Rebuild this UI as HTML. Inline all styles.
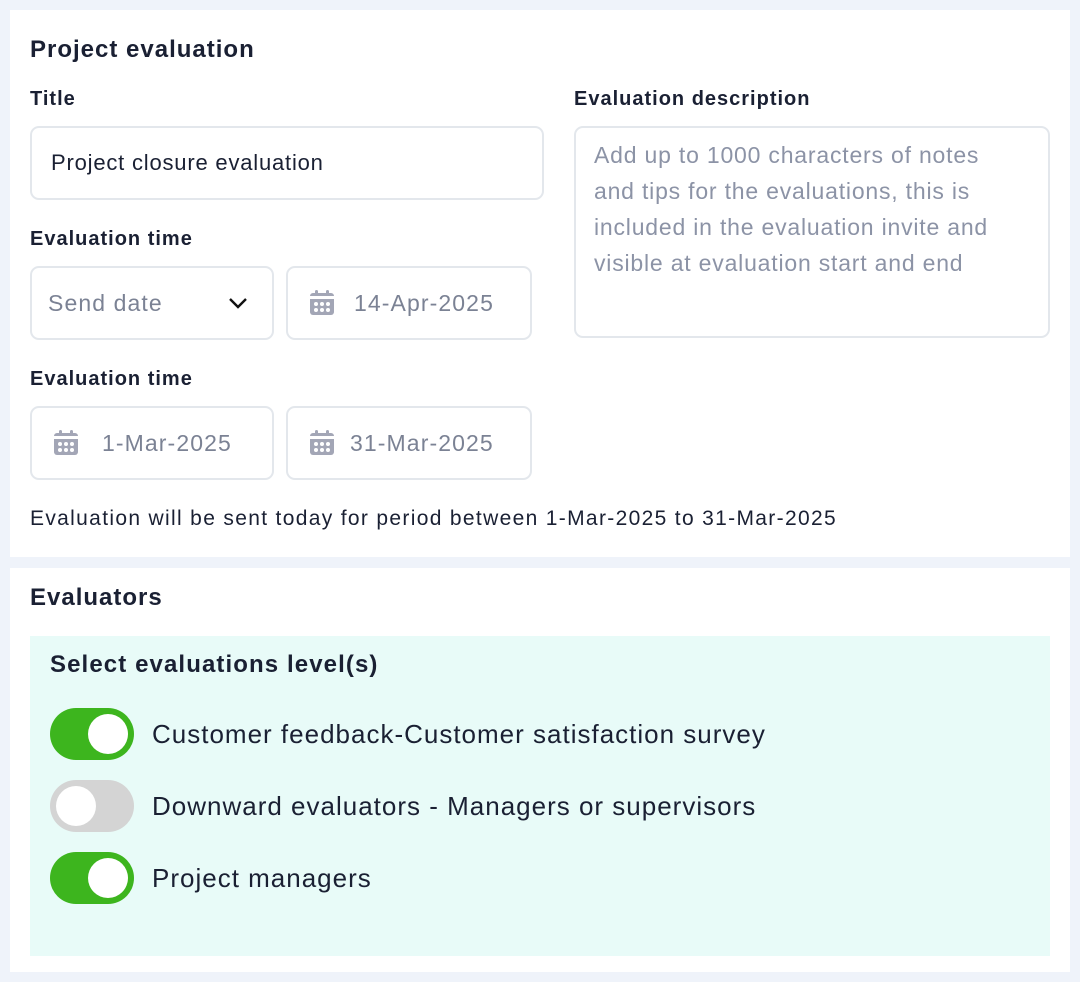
<!DOCTYPE html>
<html><head><style>
*{box-sizing:border-box;margin:0;padding:0}
body{width:1080px;height:982px;background:#eff3fa;font-family:"Liberation Sans",sans-serif;color:#1a2033;position:relative;overflow:hidden}
.card{position:absolute;left:10px;width:1060px;background:#fff}
.a{position:absolute}
h2{position:absolute;font-size:24px;font-weight:bold;color:#1a2033;letter-spacing:1px}
.lbl{position:absolute;font-size:20px;font-weight:bold;color:#1a2033;letter-spacing:1px}
.box{position:absolute;border:2px solid #e3e7ec;border-radius:9px;background:#fff;font-size:23px;color:#7b8294;display:flex;align-items:center;letter-spacing:1.1px}
.cal{display:inline-block;width:28px;height:28px;margin-right:18px}
.tg{position:absolute;left:50px;width:84px;height:52px;border-radius:26px}
.tg i{position:absolute;top:6px;width:40px;height:40px;border-radius:50%;background:#fff}
.tl{position:absolute;left:152px;font-size:26px;color:#1a2033;letter-spacing:1px}
</style></head><body>
<svg width="0" height="0" style="position:absolute"><defs><symbol id="c" viewBox="0 0 28 28"><rect x="2" y="4" width="24" height="22" rx="3" fill="#a3a6b6"/><rect x="7" y="1" width="3" height="6" rx="1.5" fill="#a3a6b6"/><rect x="18" y="1" width="3" height="6" rx="1.5" fill="#a3a6b6"/><rect x="2" y="7" width="24" height="3" fill="#fff"/><g fill="#fff"><circle cx="8" cy="15" r="2"/><circle cx="14" cy="15" r="2"/><circle cx="20" cy="15" r="2"/><circle cx="8" cy="21" r="2"/><circle cx="14" cy="21" r="2"/><circle cx="20" cy="21" r="2"/></g></symbol></defs></svg>
<div class="card" style="top:10px;height:547px"></div>
<div class="card" style="top:568px;height:404px"></div>
<h2 style="left:30px;top:36px">Project evaluation</h2>
<div class="lbl" style="left:30px;top:88px">Title</div>
<div class="lbl" style="left:574px;top:88px">Evaluation description</div>
<div class="box" style="left:30px;top:126px;width:514px;height:74px;padding-left:19px;color:#1a2033;font-size:22px;letter-spacing:0.8px">Project closure evaluation</div>
<div class="box" style="left:574px;top:126px;width:476px;height:212px;align-items:flex-start;padding:9px 34px 14px 18px;line-height:36px;font-size:23px;color:#8c93a6;letter-spacing:0.8px">Add up to 1000 characters of notes and tips for the evaluations, this is included in the evaluation invite and visible at evaluation start and end</div>
<div class="lbl" style="left:30px;top:228px">Evaluation time</div>
<div class="box" style="left:30px;top:266px;width:244px;height:74px;padding-left:16px">Send date<svg style="position:absolute;left:196px;top:28px" width="20" height="14" viewBox="0 0 20 14"><path d="M2 3l8 8 8-8" fill="none" stroke="#111" stroke-width="2.4"/></svg></div>
<div class="box" style="left:286px;top:266px;width:246px;height:74px;padding-left:20px"><svg class="cal"><use href="#c"/></svg>14-Apr-2025</div>
<div class="lbl" style="left:30px;top:368px">Evaluation time</div>
<div class="box" style="left:30px;top:406px;width:244px;height:74px;padding-left:20px"><svg class="cal" style="margin-right:22px"><use href="#c"/></svg>1-Mar-2025</div>
<div class="box" style="left:286px;top:406px;width:246px;height:74px;padding-left:20px"><svg class="cal" style="margin-right:14px"><use href="#c"/></svg>31-Mar-2025</div>
<div class="a" style="left:30px;top:507px;font-size:21px;letter-spacing:1.33px">Evaluation will be sent today for period between 1-Mar-2025 to 31-Mar-2025</div>
<h2 style="left:30px;top:584px">Evaluators</h2>
<div class="a" style="left:30px;top:636px;width:1020px;height:320px;background:#e8fbf8"></div>
<div class="a" style="left:50px;top:651px;font-size:24px;font-weight:bold;letter-spacing:1.1px">Select evaluations level(s)</div>
<div class="tg" style="top:708px;background:#3db51e"><i style="left:38px"></i></div>
<div class="tl" style="top:719px">Customer feedback-Customer satisfaction survey</div>
<div class="tg" style="top:780px;background:#d4d4d4"><i style="left:6px"></i></div>
<div class="tl" style="top:791px">Downward evaluators - Managers or supervisors</div>
<div class="tg" style="top:852px;background:#3db51e"><i style="left:38px"></i></div>
<div class="tl" style="top:863px">Project managers</div>
</body></html>
